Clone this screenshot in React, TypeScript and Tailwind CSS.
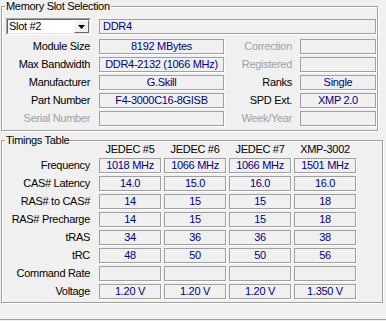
import React from 'react';

const Box: React.FC<{ children?: React.ReactNode; className?: string }> = ({ children, className = '' }) => (
  <div
    className={`h-[15px] border border-[#a0a0a0] shadow-[1px_1px_0_#fff] flex items-center justify-center text-[#000080] leading-[13px] whitespace-nowrap overflow-hidden ${className}`}
  >
    {children}
  </div>
);

const slotRows = [
  { label: 'Module Size', value: '8192 MBytes', label2: 'Correction', value2: '', dim: false, dim2: true },
  { label: 'Max Bandwidth', value: 'DDR4-2132 (1066 MHz)', label2: 'Registered', value2: '', dim: false, dim2: true },
  { label: 'Manufacturer', value: 'G.Skill', label2: 'Ranks', value2: 'Single', dim: false, dim2: false },
  { label: 'Part Number', value: 'F4-3000C16-8GISB', label2: 'SPD Ext.', value2: 'XMP 2.0', dim: false, dim2: false },
  { label: 'Serial Number', value: '', label2: 'Week/Year', value2: '', dim: true, dim2: true },
];

const headers = ['JEDEC #5', 'JEDEC #6', 'JEDEC #7', 'XMP-3002'];

const timings = [
  { label: 'Frequency', values: ['1018 MHz', '1066 MHz', '1066 MHz', '1501 MHz'] },
  { label: 'CAS# Latency', values: ['14.0', '15.0', '16.0', '16.0'] },
  { label: 'RAS# to CAS#', values: ['14', '15', '15', '18'] },
  { label: 'RAS# Precharge', values: ['14', '15', '15', '18'] },
  { label: 'tRAS', values: ['34', '36', '36', '38'] },
  { label: 'tRC', values: ['48', '50', '50', '56'] },
  { label: 'Command Rate', values: ['', '', '', ''] },
  { label: 'Voltage', values: ['1.20 V', '1.20 V', '1.20 V', '1.350 V'] },
];

export default function App() {
  return (
    <div className="w-[386px] h-[321px] bg-[#f0f0f0] text-black text-[11px] tracking-[-0.3px] font-['Liberation_Sans',Arial,sans-serif] pl-[1px] flex flex-col relative overflow-hidden">
      {/* Memory Slot Selection */}
      <fieldset className="w-[377px] h-[131px] border border-[#a0a0a0] shadow-[inset_1px_1px_0_#fff,1px_1px_0_#fff]">
        <legend className="ml-[3px] px-[1px] leading-[13px] bg-[#f0f0f0]">Memory Slot Selection</legend>
        <div className="flex items-start pl-[4px] mt-[5px]">
          <div className="w-[85px] h-[17px] border border-t-[#a0a0a0] border-l-[#a0a0a0] border-r-white border-b-white">
            <div className="h-full border border-t-[#696969] border-l-[#696969] border-r-[#e3e3e3] border-b-[#e3e3e3] bg-white flex items-center">
              <span className="flex-1 pl-[1px] leading-[13px]">Slot #2</span>
              <div className="w-[15px] h-full bg-[#f0f0f0] border border-t-white border-l-white border-r-[#696969] border-b-[#696969] flex items-center justify-center">
                <svg width="7" height="4" viewBox="0 0 7 4">
                  <polygon points="0,0 7,0 3.5,4" fill="#000" />
                </svg>
              </div>
            </div>
          </div>
          <Box className="ml-[8px] mt-[1px] w-[277px] !justify-start pl-[3px]">DDR4</Box>
        </div>
        <div className="flex flex-col gap-[3px] mt-[4px]">
          {slotRows.map((r) => (
            <div key={r.label} className="flex items-center h-[15px]">
              <span className={`w-[88px] text-right leading-[13px] ${r.dim ? 'text-[#a0a0a0]' : ''}`}>{r.label}</span>
              <Box className="ml-[9px] w-[125px]">{r.value}</Box>
              <span className={`w-[68px] text-right leading-[13px] ${r.dim2 ? 'text-[#a0a0a0]' : ''}`}>{r.label2}</span>
              <Box className="ml-[8px] w-[76px]">{r.value2}</Box>
            </div>
          ))}
        </div>
      </fieldset>

      {/* Timings Table */}
      <fieldset className="mt-[3px] w-[382px] h-[169px] border border-[#a0a0a0] shadow-[inset_1px_1px_0_#fff,1px_1px_0_#fff]">
        <legend className="ml-[3px] px-[1px] leading-[13px] bg-[#f0f0f0]">Timings Table</legend>
        <div className="flex items-center h-[13px] -mt-[4px]">
          <span className="w-[88px]" />
          <div className="ml-[9px] flex gap-[3px]">
            {headers.map((h) => (
              <span key={h} className="w-[62px] text-center leading-[13px]">{h}</span>
            ))}
          </div>
        </div>
        <div className="flex flex-col gap-[3px] mt-[2px]">
          {timings.map((t) => (
            <div key={t.label} className="flex items-center h-[15px]">
              <span className="w-[88px] text-right leading-[13px]">{t.label}</span>
              <div className="ml-[9px] flex gap-[3px]">
                {t.values.map((v, i) => (
                  <Box key={i} className="w-[62px]">{v}</Box>
                ))}
              </div>
            </div>
          ))}
        </div>
      </fieldset>

      <div className="absolute left-0 right-0 top-[319px] h-[1px] bg-[#a0a0a0]" />
    </div>
  );
}
